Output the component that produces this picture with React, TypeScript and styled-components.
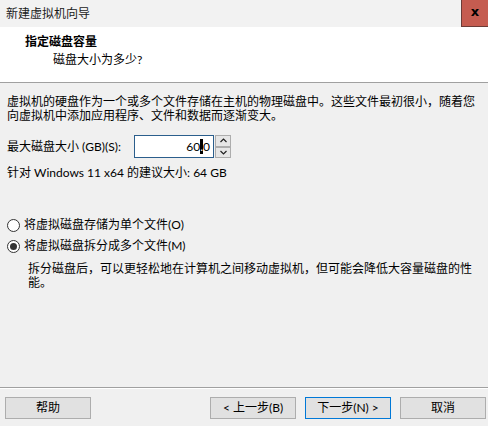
import React from "react";
import styled, { createGlobalStyle } from "styled-components";

const Global = createGlobalStyle`
  html, body { margin: 0; padding: 0; background: #f0f0f0; }
  body { font-family: "Lato", "Noto Sans CJK SC", sans-serif; font-size: 12px; color: #000; }
  * { box-sizing: border-box; }
`;

const Window = styled.div`
  width: 488px;
  height: 426px;
  background: #f0f0f0;
  display: flex;
  flex-direction: column;
  overflow: hidden;
`;

const TitleBar = styled.div`
  height: 27px;
  background: #f2f2f2;
  display: flex;
  align-items: center;
  padding-left: 6px;
`;

const TitleText = styled.span`
  font-size: 12px;
  line-height: 16px;
  color: #1a1a1a;
`;

const CloseButton = styled.div`
  margin-left: auto;
  width: 27px;
  height: 27px;
  background: #c55c50;
  border-left: 1px solid #6b3c37;
  border-bottom: 1px solid #6b3c37;
  display: flex;
  align-items: center;
  justify-content: center;
  font-family: "DejaVu Sans", sans-serif;
  font-weight: bold;
  font-size: 13px;
  color: #000;
  padding-bottom: 3px;
`;

const Header = styled.div`
  height: 55px;
  background: #fff;
  padding: 7px 0 0 25px;
  display: flex;
  flex-direction: column;
  gap: 2px;
`;

const Heading = styled.div`
  font-weight: bold;
  line-height: 16px;
`;

const SubHeading = styled.div`
  line-height: 16px;
  padding-left: 28px;
`;

const Separator = styled.div<{ $etched?: boolean }>`
  height: 1px;
  background: #a0a0a0;
  box-shadow: ${(p) => (p.$etched ? "0 1px 0 #fff" : "none")};
`;

const Content = styled.div`
  flex: 1;
  padding: 12px 7px 0 7px;
  display: flex;
  flex-direction: column;
`;

const Paragraph = styled.div<{ $indent?: number }>`
  line-height: 14px;
  padding-left: ${(p) => p.$indent ?? 0}px;
`;

const Line = styled.span`
  display: block;
  white-space: nowrap;
`;

const FieldRow = styled.div`
  display: flex;
  align-items: center;
  margin-top: 12px;
  height: 23px;
`;

const Label = styled.span`
  line-height: 16px;
  width: 127px;
  white-space: nowrap;
`;

const Input = styled.div`
  width: 80px;
  height: 23px;
  background: #fff;
  border: 1px solid #2b5e8c;
  display: flex;
  align-items: center;
  justify-content: flex-end;
  padding-right: 3px;
  font-size: 12px;
  line-height: 14px;
`;

const Selected = styled.span`
  background: #000;
  color: #fff;
  display: inline-block;
  height: 15px;
  line-height: 15px;
`;

const Spinner = styled.div`
  display: flex;
  flex-direction: column;
  margin-left: 1px;
  height: 23px;
`;

const SpinButton = styled.div`
  width: 16px;
  height: 11.5px;
  border: 1px solid #adadad;
  background: #e6e6e6;
  display: flex;
  align-items: center;
  justify-content: center;
`;

const Recommend = styled.div`
  margin-top: 7px;
  line-height: 16px;
`;

const RadioGroup = styled.div`
  margin-top: 36px;
  display: flex;
  flex-direction: column;
  gap: 5px;
`;

const RadioRow = styled.label`
  display: flex;
  align-items: center;
  gap: 4px;
  line-height: 16px;
`;

const RadioCircle = styled.span<{ $checked?: boolean }>`
  width: 13px;
  height: 13px;
  border-radius: 50%;
  border: 1px solid #333;
  background: #fff;
  display: flex;
  align-items: center;
  justify-content: center;
  &::after {
    content: "";
    width: 7px;
    height: 7px;
    border-radius: 50%;
    background: ${(p) => (p.$checked ? "#333" : "transparent")};
  }
`;

const Description = styled(Paragraph)`
  margin-top: 8px;
`;

const Footer = styled.div`
  height: 38px;
  display: flex;
  align-items: flex-start;
  padding: 9px 2px 0 5px;
`;

const Button = styled.div<{ $default?: boolean }>`
  width: 86px;
  height: 22px;
  background: #e1e1e1;
  border: 1px solid ${(p) => (p.$default ? "#0078d7" : "#adadad")};
  display: flex;
  align-items: center;
  justify-content: center;
  line-height: 16px;
`;

const Spacer = styled.div`
  flex: 1;
`;

const ButtonGroup = styled.div`
  display: flex;
  gap: 9px;
`;

const Chevron = ({ up }: { up?: boolean }) => (
  <svg width="7" height="5" viewBox="0 0 7 5">
    <path
      d={up ? "M0.5 4 L3.5 1 L6.5 4" : "M0.5 1 L3.5 4 L6.5 1"}
      fill="none"
      stroke="#222"
      strokeWidth="1.2"
    />
  </svg>
);

export default function App() {
  return (
    <>
      <Global />
      <Window>
        <TitleBar>
          <TitleText>新建虚拟机向导</TitleText>
          <CloseButton>x</CloseButton>
        </TitleBar>
        <Header>
          <Heading>指定磁盘容量</Heading>
          <SubHeading>磁盘大小为多少?</SubHeading>
        </Header>
        <Separator />
        <Content>
          <Paragraph>
            <Line>虚拟机的硬盘作为一个或多个文件存储在主机的物理磁盘中。这些文件最初很小，随着您</Line>
            <Line>向虚拟机中添加应用程序、文件和数据而逐渐变大。</Line>
          </Paragraph>
          <FieldRow>
            <Label>最大磁盘大小 (GB)(S):</Label>
            <Input>
              60<Selected>.</Selected>0
            </Input>
            <Spinner>
              <SpinButton>
                <Chevron up />
              </SpinButton>
              <SpinButton>
                <Chevron />
              </SpinButton>
            </Spinner>
          </FieldRow>
          <Recommend>针对 Windows 11 x64 的建议大小: 64 GB</Recommend>
          <RadioGroup>
            <RadioRow>
              <RadioCircle />
              将虚拟磁盘存储为单个文件(O)
            </RadioRow>
            <RadioRow>
              <RadioCircle $checked />
              将虚拟磁盘拆分成多个文件(M)
            </RadioRow>
          </RadioGroup>
          <Description $indent={21}>
            <Line>拆分磁盘后，可以更轻松地在计算机之间移动虚拟机，但可能会降低大容量磁盘的性</Line>
            <Line>能。</Line>
          </Description>
        </Content>
        <Separator $etched />
        <Footer>
          <Button>帮助</Button>
          <Spacer />
          <ButtonGroup>
            <Button>&lt; 上一步(B)</Button>
            <Button $default>下一步(N) &gt;</Button>
            <Button>取消</Button>
          </ButtonGroup>
        </Footer>
      </Window>
    </>
  );
}
